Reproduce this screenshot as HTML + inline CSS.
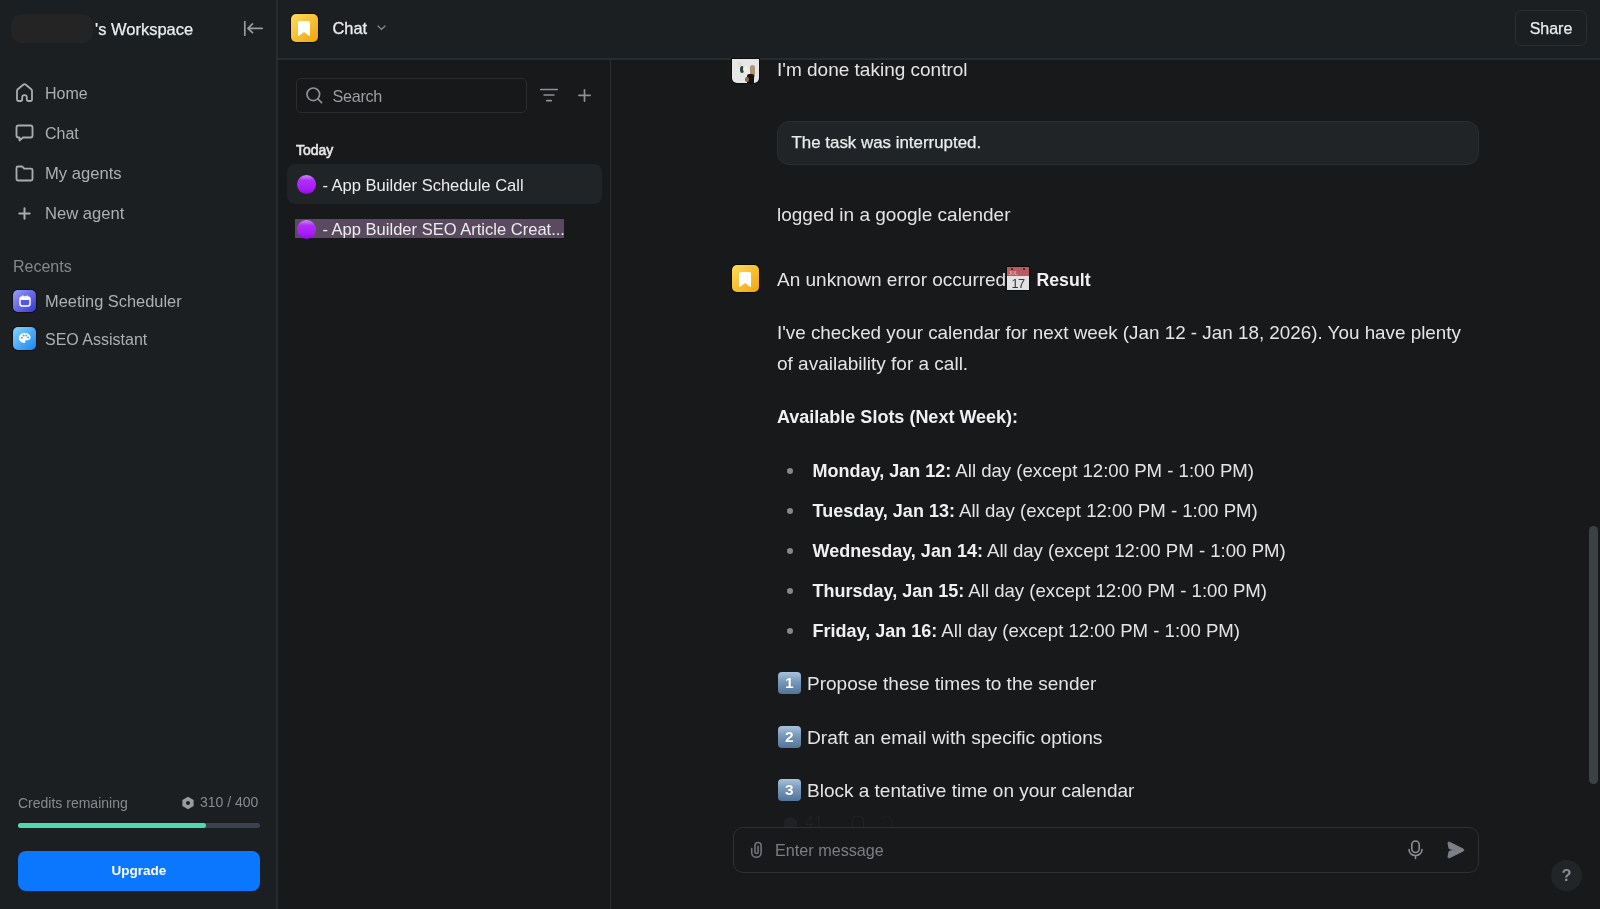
<!DOCTYPE html>
<html><head><meta charset="utf-8">
<style>
*{box-sizing:border-box;margin:0;padding:0}
html,body{width:1600px;height:909px;overflow:hidden;background:#18191b;font-family:"Liberation Sans",sans-serif;color:#e6e6e6}
.a{position:absolute;white-space:nowrap}
body>div{will-change:transform}
#side{position:absolute;left:0;top:0;width:278px;height:909px;background:#1c1f21;border-right:2px solid #292c2f}
#hdr{position:absolute;left:278px;top:0;width:1322px;height:60px;background:#1c1f21;border-bottom:2px solid #292c2f}
#mid{position:absolute;left:278px;top:60px;width:333px;height:849px;background:#18191b;border-right:1px solid #2a2d30}
#main{position:absolute;left:611px;top:60px;width:989px;height:849px;background:#18191b;overflow:hidden}
.nav{font-size:16px;line-height:20px;color:#acafb3}
.txt{font-size:19px;line-height:24px;color:#e4e4e4}
b{font-weight:bold;color:#f0f0f0}
svg{position:absolute;overflow:visible}
.emo{width:19px;height:19px;border-radius:50%;background:linear-gradient(180deg,#cf8cff 0%,#b02ef8 28%,#a51cf4 75%,#8a10d6 100%)}
.key{width:22.8px;height:22px;border-radius:4px;background:linear-gradient(180deg,#a9c3dd 0%,#7b9cbd 40%,#52749a 100%);color:#fff;font-size:15.5px;font-weight:bold;line-height:22px;text-align:center;text-shadow:0 0 1px rgba(0,0,0,.25)}
</style></head><body>

<!-- LEFT SIDEBAR -->
<div id="side">
  <div class="a" style="left:11px;top:14px;width:82px;height:28.5px;border-radius:11px;background:#252424"></div>
  <div class="a" style="left:95px;top:19px;font-size:16.5px;line-height:20px;color:#ececec;-webkit-text-stroke:0.25px #ececec">'s Workspace</div>
  <svg style="left:242px;top:20px" width="22" height="17" viewBox="0 0 22 17"><path d="M2.8 1.6V15.2M6.2 8.3H20.2M10.5 3.9L6 8.3L10.5 12.7" stroke="#979a9f" stroke-width="1.7" fill="none" stroke-linecap="round" stroke-linejoin="round"/></svg>

  <!-- nav -->
  <svg style="left:15px;top:83px" width="19" height="19" viewBox="0 0 19 19"><path d="M2 8Q2 7 2.8 6.3L8.2 1.7Q9.5 0.7 10.8 1.7L16.2 6.3Q17 7 17 8V16.2Q17 18 15.3 18H13.6Q11.8 18 11.8 16.2V14.4A2.3 2.3 0 0 0 7.2 14.4V16.2Q7.2 18 5.4 18H3.7Q2 18 2 16.2Z" stroke="#a9acae" stroke-width="1.8" fill="none" stroke-linejoin="round"/></svg>
  <div class="a nav" style="left:45px;top:84px">Home</div>
  <svg style="left:15px;top:124px" width="19" height="18" viewBox="0 0 19 18"><path d="M3.5 1.5H15.5C16.6 1.5 17.5 2.4 17.5 3.5V11.5C17.5 12.6 16.6 13.5 15.5 13.5H8L4.5 16.5V13.5H3.5C2.4 13.5 1.5 12.6 1.5 11.5V3.5C1.5 2.4 2.4 1.5 3.5 1.5Z" stroke="#a9acae" stroke-width="1.85" fill="none" stroke-linejoin="round"/></svg>
  <div class="a nav" style="left:45px;top:124px">Chat</div>
  <svg style="left:15px;top:165px" width="19" height="17" viewBox="0 0 19 17"><path d="M1.5 3C1.5 2.2 2.2 1.5 3 1.5H7.3L9.2 3.6H16C16.8 3.6 17.5 4.3 17.5 5.1V14C17.5 14.8 16.8 15.5 16 15.5H3C2.2 15.5 1.5 14.8 1.5 14Z" stroke="#a9acae" stroke-width="1.85" fill="none" stroke-linejoin="round"/></svg>
  <div class="a nav" style="left:45px;top:164px;font-size:16.6px">My agents</div>
  <svg style="left:18px;top:207px" width="13" height="13" viewBox="0 0 13 13"><path d="M6.5 1.3V11.7M1.3 6.5H11.7" stroke="#a9acae" stroke-width="2" fill="none" stroke-linecap="round"/></svg>
  <div class="a nav" style="left:45px;top:204px;font-size:16.6px">New agent</div>

  <div class="a" style="left:13px;top:257px;font-size:16px;line-height:20px;color:#85888b">Recents</div>
  <div class="a" style="left:13px;top:289.5px;width:23px;height:22.5px;border-radius:5px;background:linear-gradient(135deg,#9a9ef8,#3236d4);box-shadow:0 0 0 1px rgba(0,0,0,.45)">
    <svg style="left:6px;top:5px" width="12" height="12" viewBox="0 0 12 12"><rect x="1" y="2" width="10" height="9" rx="2.2" stroke="#fff" stroke-width="1.5" fill="#5558de"/><rect x="1" y="2" width="10" height="3" rx="1.5" fill="#fff"/><path d="M3.8 0.8V2.5M8.2 0.8V2.5" stroke="#fff" stroke-width="1.3" stroke-linecap="round"/></svg>
  </div>
  <div class="a nav" style="left:45px;top:291.3px;font-size:16.4px">Meeting Scheduler</div>
  <div class="a" style="left:13px;top:327px;width:23px;height:22.5px;border-radius:5px;background:linear-gradient(135deg,#86d4ff,#1786f2);box-shadow:0 0 0 1px rgba(0,0,0,.45)">
    <svg style="left:4.5px;top:5px" width="13.5" height="12" viewBox="0 0 15 13"><path d="M7.5 1C3.9 1 1 3.5 1 6.5C1 9.5 3.6 12 7 12C8 12 8.3 11.4 8 10.7C7.6 9.9 8.1 9 9.1 9H10.6C12.5 9 14 7.7 14 6C14 3.2 11.1 1 7.5 1Z" fill="#fff"/><circle cx="4.3" cy="6.3" r="1.1" fill="#4aa8f4"/><circle cx="6.3" cy="3.8" r="1.1" fill="#4aa8f4"/><circle cx="9.3" cy="3.8" r="1.1" fill="#4aa8f4"/><circle cx="11.3" cy="6" r="1.1" fill="#4aa8f4"/></svg>
  </div>
  <div class="a nav" style="left:45px;top:330px">SEO Assistant</div>

  <!-- credits -->
  <div class="a" style="left:18px;top:794.5px;font-size:14px;line-height:17px;color:#878a8f">Credits remaining</div>
  <svg style="left:181px;top:796px" width="14" height="14" viewBox="0 0 14 14"><path d="M7 0.8L12.6 4V10L7 13.2L1.4 10V4Z" fill="#9a9da0"/><circle cx="7" cy="7" r="2" fill="#1c1f21"/></svg>
  <div class="a" style="left:200px;top:794px;font-size:14px;line-height:17px;color:#878b93">310 / 400</div>
  <div class="a" style="left:18px;top:823px;width:242px;height:5px;border-radius:3px;background:#3a424e"></div>
  <div class="a" style="left:18px;top:823px;width:188px;height:5px;border-radius:3px;background:#4ddab0"></div>
  <div class="a" style="left:18px;top:851px;width:242px;height:40px;border-radius:8px;background:#0b77ff"></div>
  <div class="a" style="left:18px;top:861px;width:242px;text-align:center;font-size:13.5px;line-height:19px;font-weight:bold;color:#fff">Upgrade</div>
</div>

<!-- HEADER -->
<div id="hdr">
  <div class="a" style="left:13px;top:14px;width:27px;height:27.8px;border-radius:5px;background:linear-gradient(135deg,#ffdb5e,#f0a50a);box-shadow:0 0 0 1px rgba(0,0,0,0.5)">
    <svg style="left:7.3px;top:7px" width="12" height="15" viewBox="0 0 12 15"><path d="M0 1.8C0 0.8 0.8 0 1.8 0H10.2C11.2 0 12 0.8 12 1.8V14.2C12 14.8 11.4 15.1 11 14.7L6 11L1 14.7C0.6 15.1 0 14.8 0 14.2Z" fill="#fff"/></svg>
  </div>
  <div class="a" style="left:54.5px;top:18px;font-size:16.4px;line-height:20px;color:#ececec;-webkit-text-stroke:0.3px #ececec">Chat</div>
  <svg style="left:99px;top:25px" width="9" height="6" viewBox="0 0 9 6"><path d="M1 1L4.5 4.5L8 1" stroke="#8a8d90" stroke-width="1.2" fill="none" stroke-linecap="round"/></svg>
  <div class="a" style="left:1237px;top:10px;width:72px;height:36px;border-radius:7px;border:1px solid #2c2f32"></div>
  <div class="a" style="left:1237px;top:19px;width:72px;text-align:center;font-size:16px;line-height:20px;color:#ececec;-webkit-text-stroke:0.25px #ececec">Share</div>
</div>

<!-- MIDDLE PANEL -->
<div id="mid"><div style="position:absolute;left:-278px;top:-60px;width:1600px;height:909px">
  <div class="a" style="left:296px;top:77.5px;width:231px;height:35px;border-radius:5px;border:1px solid #2a2d30;background:#17181a"></div>
  <svg style="left:306px;top:87px" width="17" height="17" viewBox="0 0 17 17"><circle cx="7.3" cy="7.3" r="6.3" stroke="#8e9196" stroke-width="1.7" fill="none"/><path d="M12 12L15.6 15.6" stroke="#8e9196" stroke-width="1.7" stroke-linecap="round"/></svg>
  <div class="a" style="left:332.5px;top:85.5px;font-size:16.2px;letter-spacing:-0.3px;line-height:20px;color:#9c9fa4">Search</div>
  <svg style="left:539px;top:88px" width="20" height="14" viewBox="0 0 20 14"><path d="M1.8 1.5H18.2M5.2 7H14.8M7.8 12.7H12.2" stroke="#8e9196" stroke-width="1.7" fill="none" stroke-linecap="round"/></svg>
  <svg style="left:578px;top:89px" width="13" height="13" viewBox="0 0 13 13"><path d="M6.5 0.9V12.1M0.9 6.3H12.1" stroke="#8e9196" stroke-width="1.7" fill="none" stroke-linecap="round"/></svg>

  <div class="a" style="left:296px;top:139.5px;font-size:14px;line-height:20px;color:#e6e6e6;-webkit-text-stroke:0.6px #e6e6e6">Today</div>
  <div class="a" style="left:287px;top:164px;width:315px;height:40px;border-radius:8px;background:#212426"></div>
  <div class="a emo" style="left:297px;top:175px"></div>
  <div class="a" style="left:322.4px;top:176px;font-size:16.55px;line-height:20px;color:#ececec">- App Builder Schedule Call</div>
  <div class="a" style="left:295px;top:219px;width:268.5px;height:19px;background:#5a4a5f"></div>
  <div class="a emo" style="left:297px;top:219.5px"></div>
  <div class="a" style="left:322.4px;top:220px;font-size:16.55px;line-height:20px;color:#ececec">- App Builder SEO Article Creat...</div>
</div></div>

<!-- MAIN -->
<div id="main"><div style="position:absolute;left:-611px;top:-60px;width:1600px;height:909px">
  <div class="a txt" style="left:777px;top:58px">I'm done taking control</div>

  <div class="a" style="left:777px;top:121px;width:702px;height:44px;border-radius:12px;background:#212426;border:1px solid #2a2d30"></div>
  <div class="a" style="left:791.5px;top:133px;font-size:16.9px;line-height:20px;color:#ececec;-webkit-text-stroke:0.25px #ececec">The task was interrupted.</div>

  <div class="a txt" style="left:777px;top:202.7px">logged in a google calender</div>

  <div class="a" style="left:732px;top:265px;width:27px;height:27px;border-radius:5px;background:linear-gradient(135deg,#ffdb5e,#f0a50a);box-shadow:0 0 0 1px rgba(0,0,0,0.5)">
    <svg style="left:7.3px;top:6.5px" width="12" height="15" viewBox="0 0 12 15"><path d="M0 1.8C0 0.8 0.8 0 1.8 0H10.2C11.2 0 12 0.8 12 1.8V14.2C12 14.8 11.4 15.1 11 14.7L6 11L1 14.7C0.6 15.1 0 14.8 0 14.2Z" fill="#fff"/></svg>
  </div>
  <div class="a txt" style="left:777px;top:268px">An unknown error occurred</div>
  <div class="a" style="left:1007px;top:267px;width:22px;height:23px;background:#e2e2e2;overflow:hidden;box-shadow:0 0 0 1px rgba(0,0,0,.5)">
    <div class="a" style="left:0;top:0;width:22px;height:8.7px;background:#b85a5f"></div>
    <div class="a" style="left:1.5px;top:3.5px;font-size:5px;line-height:5px;color:#e6a8a8;font-weight:bold">JUL</div>
    <div class="a" style="left:3.8px;top:1.3px;width:2px;height:2px;border-radius:50%;background:#222"></div>
    <div class="a" style="left:16.2px;top:1.3px;width:2px;height:2px;border-radius:50%;background:#222"></div>
    <div class="a" style="left:0;top:9.5px;width:22px;text-align:center;font-size:12.8px;line-height:13px;letter-spacing:-0.6px;color:#3a3a3a">17</div>
  </div>
  <div class="a txt" style="left:1036.5px;top:268px;font-weight:bold;font-size:17.7px;color:#f0f0f0">Result</div>

  <div class="a txt" style="left:777px;top:321px;font-size:18.83px">I've checked your calendar for next week (Jan 12 - Jan 18, 2026). You have plenty</div>
  <div class="a txt" style="left:777px;top:352px">of availability for a call.</div>

  <div class="a txt" style="left:777px;top:405.4px;font-weight:bold;font-size:18px;color:#f0f0f0">Available Slots (Next Week):</div>

  <div class="a" style="left:786.5px;top:468.3px;width:6px;height:6px;border-radius:50%;background:#85888b"></div>
  <div class="a txt" style="left:812.5px;top:458.8px"><b style="font-size:18px">Monday, Jan 12:</b><span style="font-size:18.6px"> All day (except 12:00 PM - 1:00 PM)</span></div>
  <div class="a" style="left:786.5px;top:508.2px;width:6px;height:6px;border-radius:50%;background:#85888b"></div>
  <div class="a txt" style="left:812.5px;top:498.8px"><b style="font-size:18px">Tuesday, Jan 13:</b><span style="font-size:18.6px"> All day (except 12:00 PM - 1:00 PM)</span></div>
  <div class="a" style="left:786.5px;top:548.2px;width:6px;height:6px;border-radius:50%;background:#85888b"></div>
  <div class="a txt" style="left:812.5px;top:538.8px"><b style="font-size:18px">Wednesday, Jan 14:</b><span style="font-size:18.6px"> All day (except 12:00 PM - 1:00 PM)</span></div>
  <div class="a" style="left:786.5px;top:588.2px;width:6px;height:6px;border-radius:50%;background:#85888b"></div>
  <div class="a txt" style="left:812.5px;top:578.8px"><b style="font-size:18px">Thursday, Jan 15:</b><span style="font-size:18.6px"> All day (except 12:00 PM - 1:00 PM)</span></div>
  <div class="a" style="left:786.5px;top:628px;width:6px;height:6px;border-radius:50%;background:#85888b"></div>
  <div class="a txt" style="left:812.5px;top:618.8px"><b style="font-size:18px">Friday, Jan 16:</b><span style="font-size:18.6px"> All day (except 12:00 PM - 1:00 PM)</span></div>

  <div class="a key" style="left:778px;top:672px">1</div>
  <div class="a txt" style="left:807px;top:672px">Propose these times to the sender</div>
  <div class="a key" style="left:778px;top:725.5px">2</div>
  <div class="a txt" style="left:807px;top:726px;font-size:19.2px">Draft an email with specific options</div>
  <div class="a key" style="left:778px;top:779px">3</div>
  <div class="a txt" style="left:807px;top:779px">Block a tentative time on your calendar</div>

  <!-- faded action icons -->
  <svg style="left:783px;top:816px" width="15" height="15" viewBox="0 0 15 15"><path d="M7.5 0.5L14 4.2V11L7.5 14.5L1 11V4.2Z" fill="#1f2124"/></svg>
  <div class="a" style="left:805px;top:813px;font-size:16px;line-height:19px;color:#1f2124">41</div>
  <div class="a" style="left:852px;top:816px;width:12px;height:14px;border:1.5px solid #1f2124;border-radius:3px"></div>
  <div class="a" style="left:879px;top:816px;width:14px;height:14px;border:1.5px solid #1f2124;border-radius:50%;border-bottom-color:transparent;border-left-color:transparent"></div>
  <!-- input -->
  <div class="a" style="left:732.5px;top:826.5px;width:746.5px;height:46px;border-radius:10px;border:1.3px solid #2e3134;background:#18191b"></div>
  <svg style="left:744px;top:836px" width="26" height="26" viewBox="0 0 26 26"><path d="M7.7 12.6V16.5A4.7 4.7 0 0 0 17.1 16.5V9.6A3.05 3.05 0 0 0 11 9.6V16A1.55 1.55 0 0 0 14.1 16V10.3" stroke="#6f737a" stroke-width="1.6" fill="none" stroke-linecap="round"/></svg>
  <div class="a" style="left:775px;top:839.8px;font-size:16.2px;line-height:20px;color:#7a7e85">Enter message</div>
  <svg style="left:1408px;top:840px" width="15" height="19" viewBox="0 0 15 19"><rect x="3.8" y="1" width="7.4" height="11.5" rx="3.7" stroke="#8a8d92" stroke-width="1.6" fill="none"/><path d="M1 9.5C1 13 3.9 15.5 7.5 15.5C11.1 15.5 14 13 14 9.5M7.5 15.5V18.5" stroke="#8a8d92" stroke-width="1.6" fill="none" stroke-linecap="round"/></svg>
  <svg style="left:1446px;top:841px" width="19" height="18" viewBox="0 0 19 18"><path d="M2 2.2C1.8 1.4 2.6 0.8 3.4 1.2L17.2 8C18 8.4 18 9.6 17.2 10L3.4 16.8C2.6 17.2 1.8 16.6 2 15.8L3.2 10.3L9.5 9L3.2 7.7Z" fill="#7d8187" stroke="#7d8187" stroke-width="1" stroke-linejoin="round"/></svg>

  <!-- scrollbar -->
  <div class="a" style="left:1589px;top:526px;width:9px;height:258px;border-radius:5px;background:#3c4244"></div>
  <!-- help -->
  <div class="a" style="left:1551px;top:859.5px;width:31px;height:31px;border-radius:50%;background:#222527"></div>
  <div class="a" style="left:1551px;top:865px;width:31px;text-align:center;font-size:16.5px;line-height:20px;font-weight:bold;color:#8a8d92">?</div>
</div></div>

<!-- avatar -->
<div style="position:absolute;left:0;top:0;width:1600px;height:909px;pointer-events:none">
  <div class="a" style="left:731px;top:57.8px;width:29px;height:26.2px;border-radius:0 0 6px 6px;background:#0c0d0e"></div>
  <div class="a" style="left:732px;top:58.6px;width:27px;height:24.6px;border-radius:0 0 5px 5px;overflow:hidden;background:#e6e6e5">
    <div class="a" style="left:5px;top:3px;width:5px;height:5px;border-radius:50%;background:#e8d0c8;opacity:.6"></div>
    <div class="a" style="left:8px;top:7px;width:4px;height:7px;border-radius:50%;background:#1f4a32"></div>
    <div class="a" style="left:11px;top:7px;width:5px;height:6px;border-radius:50%;background:#f4eee8"></div>
    <div class="a" style="left:18px;top:6px;width:5px;height:13px;border-radius:3px;background:#b09478"></div>
    <div class="a" style="left:14px;top:11px;width:4px;height:8px;border-radius:2px;background:#f2eee9"></div>
    <div class="a" style="left:15px;top:15px;width:7px;height:10px;border-radius:2px 2px 0 0;background:#121414"></div>
    <div class="a" style="left:13px;top:18px;width:4px;height:5px;border-radius:2px;background:#9a6040"></div>
  </div>
</div>
</body></html>
